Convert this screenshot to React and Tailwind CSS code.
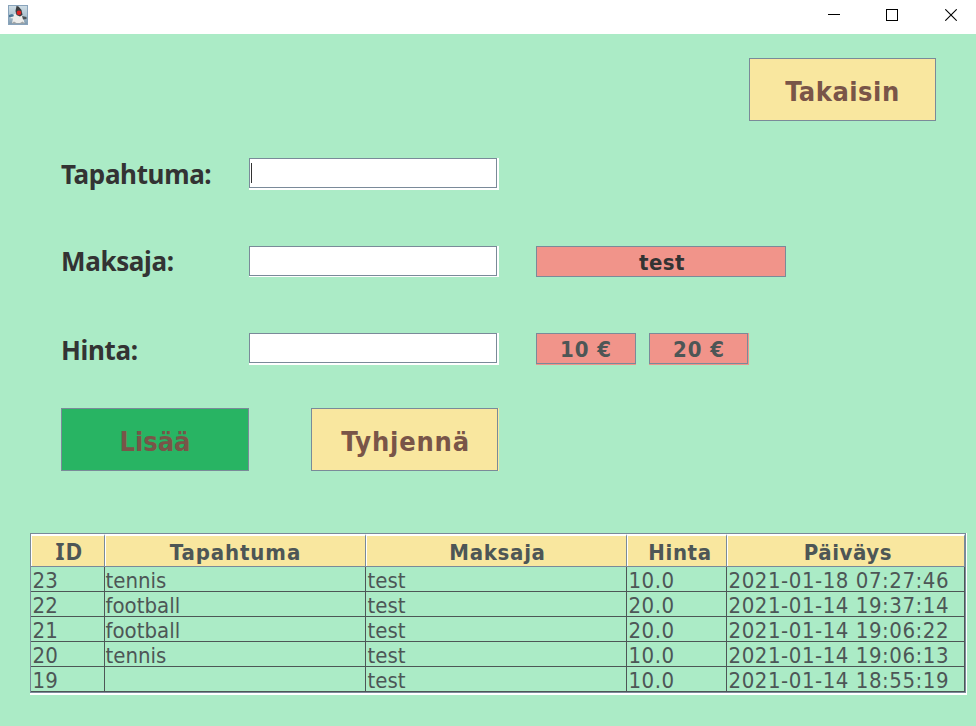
const rows = [
  ["23", "tennis", "test", "10.0", "2021-01-18 07:27:46"],
  ["22", "football", "test", "20.0", "2021-01-14 19:37:14"],
  ["21", "football", "test", "20.0", "2021-01-14 19:06:22"],
  ["20", "tennis", "test", "10.0", "2021-01-14 19:06:13"],
  ["19", "", "test", "10.0", "2021-01-14 18:55:19"],
];

const columns = [
  { name: "ID", style: "font-['Noto_Sans',sans-serif] text-[23px] tracking-[1px] pl-[3px] pt-px" },
  { name: "Tapahtuma", style: "text-[22px] tracking-[0.9px] pt-[3px]" },
  { name: "Maksaja", style: "text-[22px] tracking-[0.7px] pt-[3px] pl-0.5" },
  { name: "Hinta", style: "text-[22px] tracking-[0.6px] pt-[3px] pl-1.5" },
  { name: "Päiväys", style: "text-[22px] tracking-[0.6px] pt-[3px] pl-1" },
];

const cellStyles = [
  "pl-[1.5px] tracking-[0.2px]",
  "pl-[0.5px]",
  "pl-[1.5px]",
  "pl-[1.5px] tracking-[0.5px]",
  "pl-[1.5px] tracking-[0.55px]",
];

function DukeIcon() {
  return (
    <svg width="20" height="20" viewBox="0 0 20 20" className="block">
      <defs>
        <linearGradient id="sky" x1="0" y1="0" x2="0" y2="1">
          <stop offset="0" stopColor="#cfdde5" />
          <stop offset="0.5" stopColor="#b0c5d2" />
          <stop offset="1" stopColor="#7d97ac" />
        </linearGradient>
      </defs>
      <rect x="0.5" y="0.5" width="19" height="19" fill="url(#sky)" stroke="#88a3bb" />
      <path d="M1 10L4 9L6.5 10.5L5 13L1 12Z" fill="#4c7796" />
      <path d="M6 9L13.5 8.5L15 12L16.5 18H4L5 13.5L2 13L3 12L5.5 11.5Z" fill="#ececea" />
      <path d="M14 11L18.5 12V14L15 14.5Z" fill="#4a5256" />
      <path d="M8.5 1L10.5 1.5L13.5 5L14.5 10L12 11.5L8.5 10L7.5 6Z" fill="#3a3c3e" />
      <path d="M3.5 18.5L6 16.5L8.5 18H12L14.5 16.5L17 18.5Z" fill="#a4a6a6" />
      <circle cx="11" cy="7.8" r="2.3" fill="#df2424" />
    </svg>
  );
}

function TitleBar() {
  return (
    <header className="flex h-[34px] items-start justify-between bg-white pl-2">
      <div className="pt-[5px]">
        <DukeIcon />
      </div>
      <div className="flex pt-[9px] pr-[19px]">
        <svg width="12" height="12" className="mr-[46px]" shapeRendering="crispEdges">
          <rect y="5" width="12" height="1" fill="#000" />
        </svg>
        <svg width="12" height="12" className="mr-[47px]" shapeRendering="crispEdges">
          <rect x="0.5" y="0.5" width="11" height="11" fill="none" stroke="#000" />
        </svg>
        <svg width="12" height="12">
          <path d="M0.3 0.3L11.7 11.7M11.7 0.3L0.3 11.7" stroke="#000" strokeWidth="1.1" />
        </svg>
      </div>
    </header>
  );
}

function Field({ height, focused }) {
  return (
    <div className={"w-[250px] bg-white pr-0.5 " + height}>
      <div className="h-[30px] border border-[#7a8a99] bg-white pt-1 pl-px">
        {focused && <div className="h-5 w-px bg-[#333333]" />}
      </div>
    </div>
  );
}

function Label({ children, className }) {
  return (
    <div
      className={
        "w-[188px] font-['Noto_Sans',sans-serif] text-[26px] leading-[30px] font-bold tracking-[-0.35px] whitespace-nowrap text-[#333333] " +
        className
      }
    >
      {children}
    </div>
  );
}

function BigButton({ children, className }) {
  return (
    <button
      className={
        "flex h-[63px] items-center justify-center border border-[#7a8a99] pt-1 text-[27px] leading-none font-bold text-[#795548] " +
        className
      }
    >
      {children}
    </button>
  );
}

function SmallButton({ children, className }) {
  return (
    <button
      className={
        "flex h-[31px] items-center justify-center border border-[#7a8a99] bg-[#f1948a] pt-0.5 text-[22px] leading-none font-bold " +
        className
      }
    >
      {children}
    </button>
  );
}

function EventTable() {
  return (
    <div className="ml-[30px] h-[162px] w-[937px] border-r border-b-2 border-white">
      <div className="h-[160px] w-[936px] border border-[#7a8a99]">
        <div className="grid h-[33px] grid-cols-[74px_261px_261px_100px_238px] border-b border-[#7a8a99]">
          {columns.map((column) => (
            <div
              key={column.name}
              className={
                "flex items-center justify-center border-t-2 border-r border-l border-t-white border-r-[#7a8a99] border-l-white bg-[#f9e79f] leading-none font-bold text-[#4d5656] " +
                column.style
              }
            >
              {column.name}
            </div>
          ))}
        </div>
        {rows.map((row) => (
          <div key={row[0]} className="grid h-[25px] grid-cols-[74px_261px_261px_100px_238px]">
            {row.map((cell, i) => (
              <div
                key={i}
                className={
                  "h-[25px] border-r border-b border-[#4d5656] pt-0.5 text-[22px] leading-[24px] whitespace-nowrap text-[#4d5656] " +
                  cellStyles[i]
                }
              >
                {cell}
              </div>
            ))}
          </div>
        ))}
      </div>
    </div>
  );
}

export default function App() {
  return (
    <div className="h-[726px] w-[976px] overflow-hidden bg-[#abebc6] font-['DejaVu_Sans_Condensed','DejaVu_Sans',sans-serif] [font-stretch:condensed]">
      <TitleBar />
      <div className="flex justify-end pt-6 pr-10">
        <BigButton className="w-[187px] bg-[#f9e79f] tracking-[0.5px]">Takaisin</BigButton>
      </div>
      <div className="mt-[37px] flex h-[88px] items-start pl-[61px]">
        <Label className="pt-px">Tapahtuma:</Label>
        <Field height="h-8" focused />
      </div>
      <div className="flex h-[87px] items-start pl-[61px]">
        <Label>Maksaja:</Label>
        <Field height="h-[31px]" />
        <SmallButton className="ml-[37px] w-[250px] pl-0.5 tracking-[0.5px] text-[#333333]">test</SmallButton>
      </div>
      <div className="flex h-[75px] items-start pl-[61px]">
        <Label className="pt-0.5">Hinta:</Label>
        <Field height="h-8" />
        <div className="ml-[37px] bg-[#f1948a] pb-px">
          <SmallButton className="w-[100px] tracking-[0.9px] text-[#4d5656]">10 €</SmallButton>
        </div>
        <div className="ml-[13px] bg-[#f1948a] pr-px pb-px">
          <SmallButton className="w-[99px] pl-px tracking-[0.9px] text-[#4d5656]">20 €</SmallButton>
        </div>
      </div>
      <div className="flex h-[125px] items-start gap-[62px] pl-[61px]">
        <BigButton className="w-[188px] bg-[#28b463]">Lisää</BigButton>
        <div className="bg-[#f9e79f] pr-px">
          <BigButton className="w-[187px] bg-[#f9e79f] pl-0.5 tracking-[0.8px]">Tyhjennä</BigButton>
        </div>
      </div>
      <EventTable />
    </div>
  );
}
